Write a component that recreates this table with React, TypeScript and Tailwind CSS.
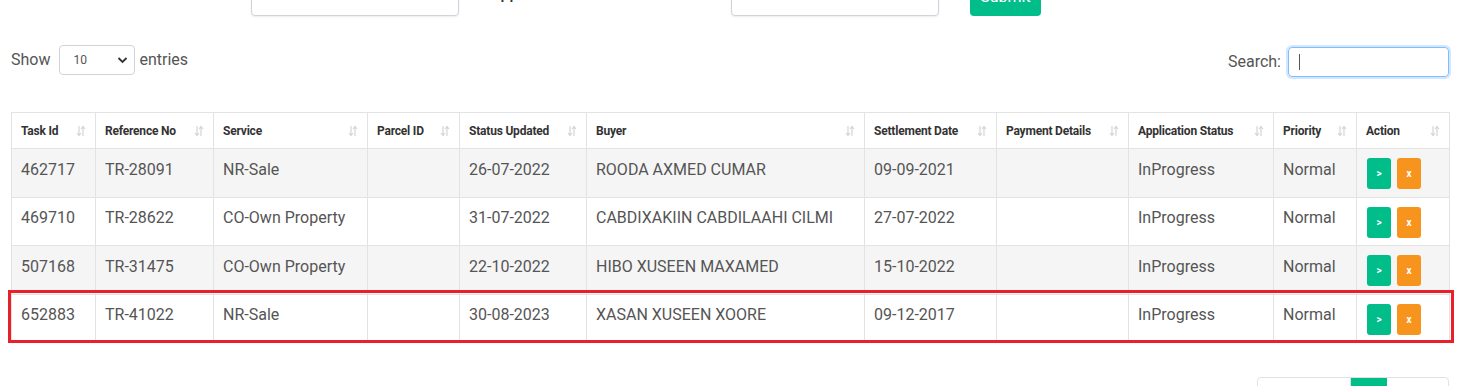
import React from "react";

interface Row {
  taskId: string;
  refNo: string;
  service: string;
  parcelId: string;
  statusUpdated: string;
  buyer: string;
  settlement: string;
  payment: string;
  appStatus: string;
  priority: string;
}

const columns = [
  { label: "Task Id", w: "w-[84px]" },
  { label: "Reference No", w: "w-[118px]" },
  { label: "Service", w: "w-[154px]" },
  { label: "Parcel ID", w: "w-[92px]" },
  { label: "Status Updated", w: "w-[127px]" },
  { label: "Buyer", w: "w-[278px]" },
  { label: "Settlement Date", w: "w-[132px]" },
  { label: "Payment Details", w: "w-[132px]" },
  { label: "Application Status", w: "w-[145px]" },
  { label: "Priority", w: "w-[83px]" },
  { label: "Action", w: "w-[93px]" },
];

const rows: Row[] = [
  { taskId: "462717", refNo: "TR-28091", service: "NR-Sale", parcelId: "", statusUpdated: "26-07-2022", buyer: "ROODA AXMED CUMAR", settlement: "09-09-2021", payment: "", appStatus: "InProgress", priority: "Normal" },
  { taskId: "469710", refNo: "TR-28622", service: "CO-Own Property", parcelId: "", statusUpdated: "31-07-2022", buyer: "CABDIXAKIIN CABDILAAHI CILMI", settlement: "27-07-2022", payment: "", appStatus: "InProgress", priority: "Normal" },
  { taskId: "507168", refNo: "TR-31475", service: "CO-Own Property", parcelId: "", statusUpdated: "22-10-2022", buyer: "HIBO XUSEEN MAXAMED", settlement: "15-10-2022", payment: "", appStatus: "InProgress", priority: "Normal" },
  { taskId: "652883", refNo: "TR-41022", service: "NR-Sale", parcelId: "", statusUpdated: "30-08-2023", buyer: "XASAN XUSEEN XOORE", settlement: "09-12-2017", payment: "", appStatus: "InProgress", priority: "Normal" },
];

function SortIcon() {
  return (
    <svg width="10" height="12" viewBox="0 0 10 12" className="shrink-0">
      <path d="M3 1v9.5M1 8l2 2.5L5 8" stroke="#d5d5d5" strokeWidth="1.2" fill="none" />
      <path d="M7 11V1.5M5 4l2-2.5L9 4" stroke="#d5d5d5" strokeWidth="1.2" fill="none" />
    </svg>
  );
}

export default function App() {
  return (
    <div className="min-h-screen bg-white pl-[11px] pr-[13px] text-[#555] font-['Roboto',sans-serif] overflow-hidden">
      {/* Filter form (scrolled partly out of view) */}
      <div className="-mt-[22px] flex items-start h-[38px]">
        <div className="w-[240px] mt-[4px] text-[16px] text-[#555]">Customer Name</div>
        <div className="w-[208px] h-[38px] border border-[#ced4da] rounded-[4px] shadow-[0_1px_2px_rgba(0,0,0,0.08)]" />
        <div className="w-[272px] pl-[31px] mt-[4px] text-[16px] text-[#333] font-medium">Applicant Mobile Number</div>
        <div className="w-[208px] h-[38px] border border-[#ced4da] rounded-[4px] shadow-[0_1px_2px_rgba(0,0,0,0.08)]" />
        <button className="ml-[31px] w-[71px] h-[38px] rounded-[4px] bg-[#00bd8a] text-white text-[16px]">Submit</button>
      </div>

      {/* Length + search */}
      <div className="mt-[29px] flex items-center justify-between">
        <div className="flex items-center text-[16px] text-[#555] -mt-[2px]">
          <span className="mr-[9px]">Show</span>
          <div className="w-[76px] h-[30px] border border-[#ced4da] rounded-[4px] flex items-center justify-between pl-[13px] pr-[6px]">
            <span className="text-[12px] text-[#555]">10</span>
            <svg width="11" height="8" viewBox="0 0 11 8">
              <path d="M1.5 2l4 4 4-4" stroke="#333" strokeWidth="1.8" fill="none" />
            </svg>
          </div>
          <span className="ml-[4px]">entries</span>
        </div>
        <div className="flex items-center text-[16px] text-[#555] mt-[2px]">
          <span className="mr-[7px]">Search:</span>
          <div className="w-[161px] h-[30px] border border-[#80bdff] rounded-[4px] shadow-[0_0_0_2px_rgba(0,123,255,0.18)] flex items-center pl-[10px]">
            <span className="w-px h-[16px] bg-[#555]" />
          </div>
        </div>
      </div>

      {/* Table */}
      <div className="relative mt-[35px]">
        <table className="w-[1438px] table-fixed border-collapse">
          <thead>
            <tr className="h-[36px]">
              {columns.map((c) => (
                <th key={c.label} className={`${c.w} border border-[#e3e3e3] px-[9px] text-left align-middle`}>
                  <div className="flex items-center justify-between">
                    <span className="text-[12px] font-bold text-[#333] tracking-[-0.2px] whitespace-nowrap">{c.label}</span>
                    <SortIcon />
                  </div>
                </th>
              ))}
            </tr>
          </thead>
          <tbody>
            {rows.map((r, i) => (
              <tr key={r.taskId} className={`h-[48.5px] ${i % 2 === 0 ? "bg-[#f5f5f5]" : "bg-white"}`}>
                {[r.taskId, r.refNo, r.service, r.parcelId, r.statusUpdated, r.buyer, r.settlement, r.payment, r.appStatus, r.priority].map((v, j) => (
                  <td key={j} className="border border-[#e3e3e3] px-[9px] text-[16px] text-[#555] whitespace-nowrap align-middle">
                    <span className="relative -top-[3px]">{v}</span>
                  </td>
                ))}
                <td className="border border-[#e3e3e3] px-[10px] align-middle">
                  <div className="flex gap-[6px] mt-[2px]">
                    <button className="w-[24px] h-[31px] rounded-[3px] bg-[#00bd8a] text-white text-[10px] font-bold">&gt;</button>
                    <button className="w-[24px] h-[31px] rounded-[3px] bg-[#f7941d] text-white text-[10px] font-bold">x</button>
                  </div>
                </td>
              </tr>
            ))}
          </tbody>
        </table>
        {/* Highlight annotation */}
        <div className="absolute left-[-3px] top-[178px] w-[1446px] h-[53px] border-[3px] border-[#e8202a] pointer-events-none" />
      </div>

      {/* Pagination */}
      <div className="mt-[34px] flex justify-end">
        <div className="flex w-[192px] h-[38px] border border-[#dee2e6] rounded-[4px] text-[14px] text-[#6c757d] overflow-hidden">
          <div className="w-[93px] flex items-center justify-center border-r border-[#dee2e6]">Previous</div>
          <div className="w-[36px] flex items-center justify-center bg-[#00bd8a] text-white">1</div>
          <div className="flex-1 flex items-center justify-center">Next</div>
        </div>
      </div>
    </div>
  );
}
